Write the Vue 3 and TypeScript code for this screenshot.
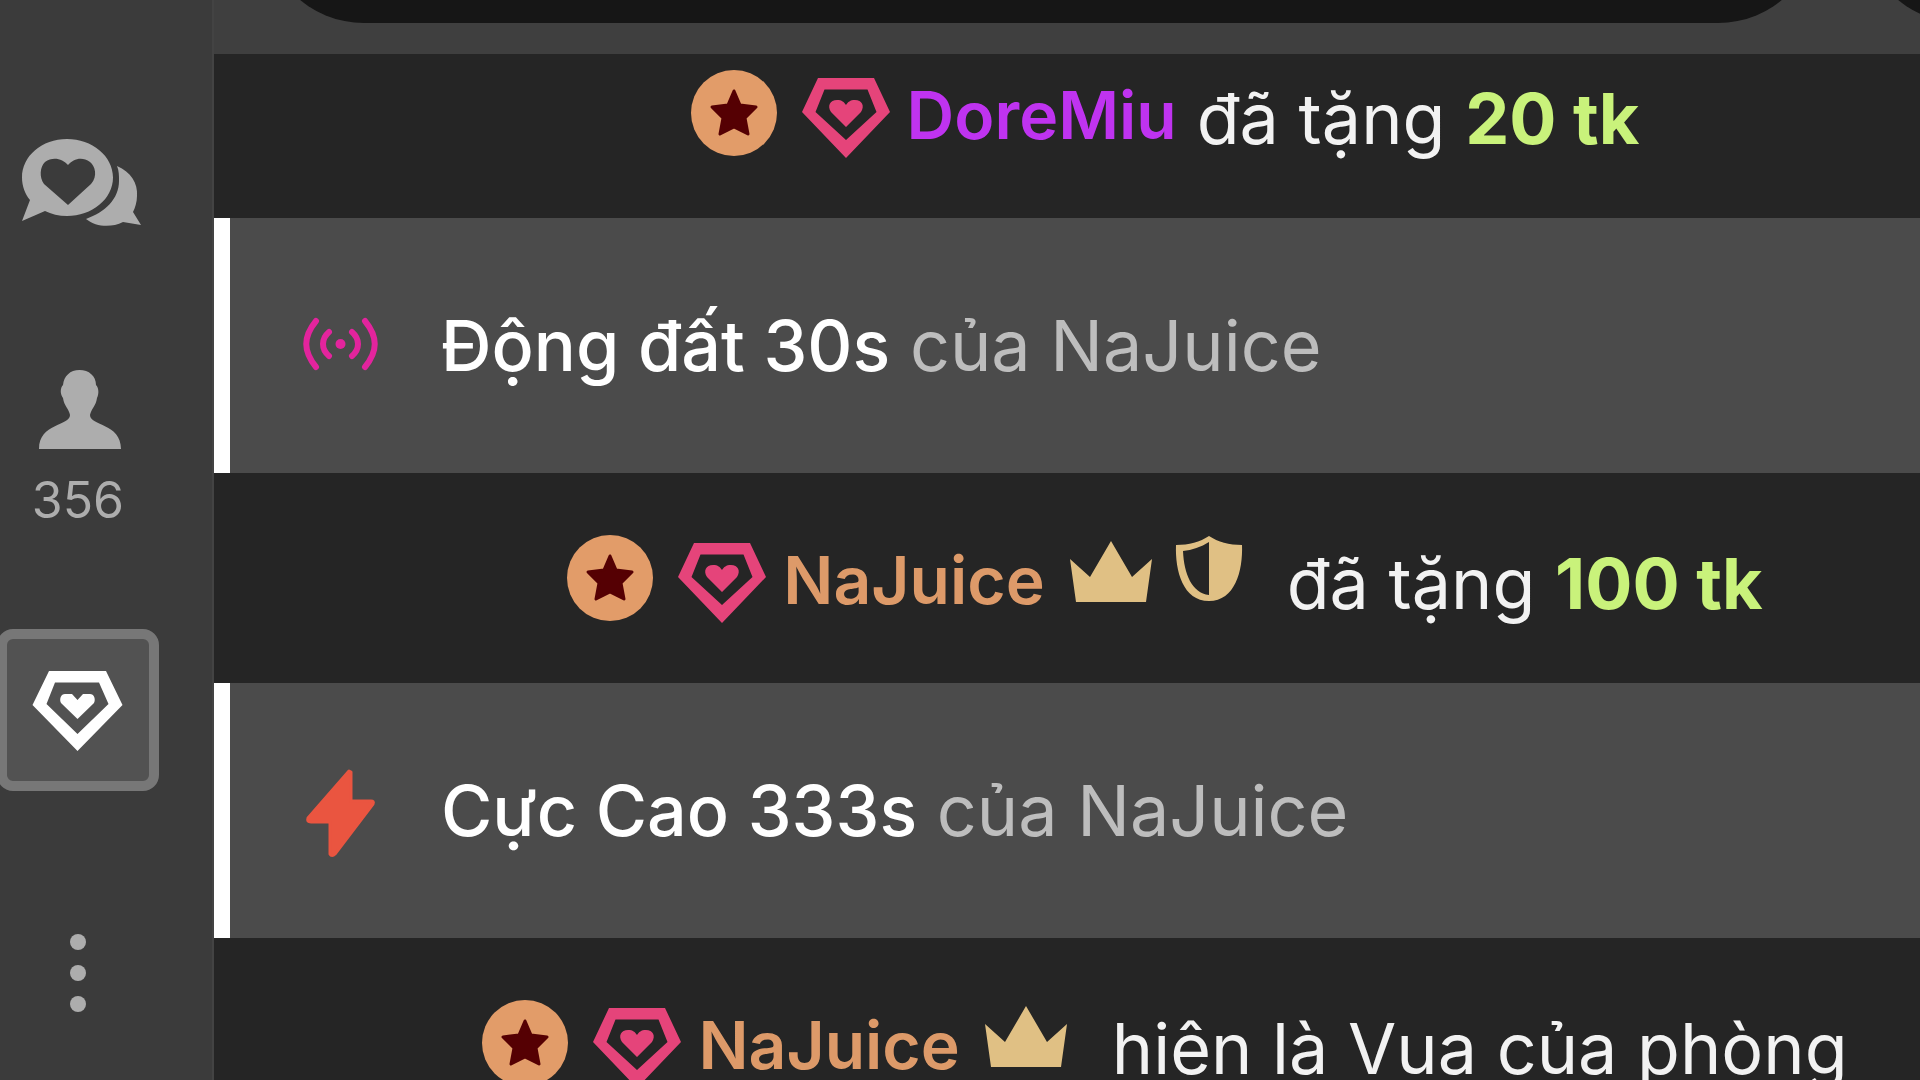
<script setup lang="ts">
type Part = { text: string; amount?: boolean }
type Gift = {
  kind: 'gift'
  id: number
  name: string
  color: string
  crown?: boolean
  shield?: boolean
  parts: Part[]
}
type Effect = { kind: 'effect'; id: number; icon: 'wave' | 'bolt'; title: string; owner: string }

const feed: (Gift | Effect)[] = [
  {
    kind: 'gift', id: 1, name: 'DoreMiu', color: '#bf33f0',
    parts: [{ text: 'đã tặng ' }, { text: '20 tk', amount: true }],
  },
  { kind: 'effect', id: 2, icon: 'wave', title: 'Động đất 30s', owner: 'của NaJuice' },
  {
    kind: 'gift', id: 3, name: 'NaJuice', color: '#dd9a69', crown: true, shield: true,
    parts: [{ text: 'đã tặng ' }, { text: '100 tk', amount: true }],
  },
  { kind: 'effect', id: 4, icon: 'bolt', title: 'Cực Cao 333s', owner: 'của NaJuice' },
  {
    kind: 'gift', id: 5, name: 'NaJuice', color: '#dd9a69', crown: true,
    parts: [{ text: 'hiện là Vua của phòng' }],
  },
]
</script>

<template>
  <div class="app">
    <nav class="rail">
      <button class="rail-btn chat" type="button" aria-label="Chat">
        <svg width="120" height="88" viewBox="-3 0 120 88">
          <path fill="#adadad" fill-rule="evenodd" d="M46 0C71 0 92 17 92 38.500S71 77 46 77C38 77 30 75 24 72L1 82L9 61C4 55 1 47 1 38.500C1 17 21 0 46 0ZM47 66L70 45C77 37 74 27 69 23C61 17 52 20 47 26C42 20 32 17 24 23C19 28 18 38 23 45Z" />
          <path fill="#adadad" d="M96 27C110 33 117 44 116 57C116 63 114 69 112 73L120 86L102 83C90 89 75 88 65 80C84 73 98 60 98 42C98 36 98 32 96 27Z" />
        </svg>
      </button>
      <button class="rail-btn users" type="button" aria-label="Viewers">
        <svg width="84" height="80" viewBox="-2 0 84 80">
          <path fill="#adadad" d="M41.500 0C51 0 58 6 58 15C61 18 61 24 59 28C58 36 53 39 52 45C52 56 83 53 83 79H1C1 53 32 56 32 45C31 39 26 36 25 28C22 24 22 18 25 15C26 6 32 0 41.500 0Z" />
        </svg>
        <span class="count">356</span>
      </button>
      <button class="rail-btn fanclub" type="button" aria-label="Fan club">
        <svg width="92" height="92" viewBox="0 0 92 92">
          <path fill="#fff" fill-rule="evenodd" d="M17 7H74L90.500 41L45.500 87L0.500 41ZM23 18.500L14.500 40L45.500 70L76.500 40L67 18.500Z" />
          <path fill="#fff" d="M45.500 55L29 39C27 35 29 30 33 30H40L45.500 36L51 30H58C62 30 64 35 62 39Z" />
        </svg>
      </button>
      <button class="rail-btn more" type="button" aria-label="More">
        <svg width="20" height="80" viewBox="0 0 20 80">
          <circle cx="10" cy="9" r="8" fill="#adadad" />
          <circle cx="10" cy="40" r="8" fill="#adadad" />
          <circle cx="10" cy="71" r="8" fill="#adadad" />
        </svg>
      </button>
    </nav>

    <main class="panel">
      <header class="composer">
        <input class="field" type="text" aria-label="Message" />
        <button class="send" type="button" aria-label="Send"></button>
      </header>

      <div class="feed">
        <template v-for="item in feed" :key="item.id">
          <article v-if="item.kind === 'gift'" class="gift">
            <svg width="86" height="88" viewBox="0 0 86 88">
              <ellipse cx="43" cy="44" rx="43" ry="43" fill="#e29c69" />
              <path fill="#550003" stroke="#550003" stroke-width="3" stroke-linejoin="round" d="M43 22L49 36L65 38L54 49L57 65L43 58L29 65L32 49L21 38L37 36Z" />
            </svg>
            <svg width="90" height="94" viewBox="0 0 90 94">
              <path fill="#e5447a" fill-rule="evenodd" d="M17 12H73L89 46L45 92L1 46ZM23.500 23.500L14.500 46L45 74L75.500 46L66.500 23.500Z" />
              <path fill="#e5447a" d="M45 61L30 46C26 40 29 34 36 34C41 34 43 36 45 39C47 36 49 34 54 34C61 34 64 40 60 46Z" />
            </svg>
            <strong class="name" :style="{ color: item.color }">{{ item.name }}</strong>
            <span v-if="item.crown" class="badges">
              <svg width="84" height="74" viewBox="0 0 84 74">
                <path fill="#e0c084" d="M42 0L63 36L83 18L77 61H7L1 18L21 36Z" />
              </svg>
              <svg v-if="item.shield" width="68" height="84" viewBox="0 0 68 84">
                <path fill="#e0c084" fill-rule="evenodd" d="M34 0C43 6 54 9 67 9C68 35 60 65 34 65C8 65 0 35 1 9C14 9 25 6 34 0ZM34 6C26 11 17 14 8 15C9 38 17 57 34 59Z" />
              </svg>
            </span>
            <span class="message"><template v-for="part in item.parts" :key="part.text"><b v-if="part.amount" class="amount">{{ part.text }}</b><template v-else>{{ part.text }}</template></template></span>
          </article>

          <article v-else class="effect">
            <svg v-if="item.icon === 'wave'" width="76" height="90" viewBox="0 0 76 90">
              <g fill="none" stroke="#e3249d" stroke-width="6" stroke-linecap="round">
                <path d="M13 20C0 36 0 50 13 66M62 20C75 36 75 50 62 66" />
                <path d="M26 31C18 38 18 48 26 55M49 31C57 38 57 48 49 55" />
              </g>
              <circle cx="37.500" cy="43" r="5" fill="#e3249d" />
            </svg>
            <svg v-else width="76" height="90" viewBox="0 0 76 90">
              <path fill="#ea5540" stroke="#ea5540" stroke-width="3" stroke-linejoin="round" d="M46 5L5 52C4 55 5 56 8 56H27V88C28 90 30 90 32 88L70 38C71 36 70 35 68 35H48V6Z" />
            </svg>
            <p class="effect-text"><span class="title">{{ item.title }}</span> {{ item.owner }}</p>
          </article>
        </template>
      </div>
    </main>
  </div>
</template>

<style>
body {
  margin: 0;
  background: #252525;
}
</style>

<style scoped>
.app {
  display: flex;
  height: 100vh;
  overflow: hidden;
  font-family: Inter, "Noto Sans", sans-serif;
  background: #252525;
}

svg {
  display: block;
  flex: none;
  overflow: visible;
}

button {
  padding: 0;
  border: 0;
  background: none;
  font: inherit;
  color: inherit;
}

.rail {
  box-sizing: border-box;
  flex: none;
  display: flex;
  flex-direction: column;
  align-items: center;
  width: 214px;
  padding: 139px 56px 0 0;
  border-right: 2px solid #434343;
  background: #3b3b3b;
}

.rail-btn {
  flex: none;
}

.chat {
  margin-bottom: 143px;
}

.users {
  display: flex;
  flex-direction: column;
  align-items: center;
  gap: 20px;
  margin-bottom: 99px;
  color: #adadad;
}

.count {
  font-size: 50px;
  line-height: 60px;
}

.fanclub {
  box-sizing: border-box;
  display: flex;
  align-items: center;
  justify-content: center;
  width: 162px;
  height: 162px;
  margin-bottom: 142px;
  border: 10px solid #777;
  border-radius: 16px;
  background: #525252;
}

.panel {
  flex: 1;
  min-width: 0;
  overflow: hidden;
}

.composer {
  position: relative;
  z-index: 1;
  box-sizing: border-box;
  display: flex;
  align-items: flex-end;
  gap: 44px;
  height: 54px;
  padding: 0 0 31px 50px;
  overflow: hidden;
  background: #3f3f3f;
}

.field {
  box-sizing: border-box;
  flex: 1;
  min-width: 0;
  height: 200px;
  padding: 0 80px;
  border: 0;
  border-radius: 100px;
  background: #161616;
  color: #fff;
  font: inherit;
  font-size: 70px;
}

.send {
  flex: none;
  width: 200px;
  height: 200px;
  margin-right: -142px;
  border-radius: 50%;
  background: #161616;
}

/* The feed is scrolled so that its first row slides under the composer. */
.feed {
  margin-top: -46px;
}

.gift {
  display: flex;
  align-items: center;
  justify-content: center;
  height: 210px;
  padding-left: 196px;
  background: #252525;
  white-space: nowrap;
}

.gift > svg + svg {
  margin-left: 24px;
}

.name {
  margin-left: 16px;
  padding-top: 4px;
  font-size: 66px;
  line-height: 80px;
  font-weight: 600;
}

.badges {
  display: flex;
  align-items: center;
  gap: 22px;
  margin: 0 24px 0 24px;
}

.message {
  margin-left: 20px;
  padding-top: 12px;
  font-size: 70px;
  line-height: 84px;
  color: #f2f2f2;
}

.amount {
  font-weight: 700;
  color: #c9f27b;
}

.effect {
  box-sizing: border-box;
  display: flex;
  align-items: center;
  gap: 62px;
  height: 255px;
  padding-left: 73px;
  border-left: 16px solid #fff;
  background: #4b4b4b;
  white-space: nowrap;
}

.effect-text {
  margin: 0;
  font-size: 70px;
  line-height: 84px;
  color: #bdbdbd;
}

.title {
  font-weight: 500;
  color: #fff;
}
</style>
